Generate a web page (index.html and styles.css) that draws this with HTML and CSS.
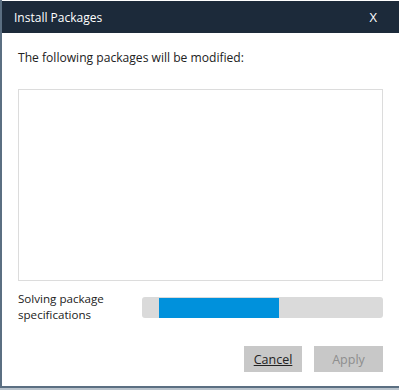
FILE: index.html
```html
<!DOCTYPE html>
<html lang="en">

<head>
  <meta charset="UTF-8">
  <title>Install Packages</title>
  <link rel="stylesheet" href="styles.css">
</head>

<body>
  <div class="dialog">
    <div class="dialog-header">
      <span class="dialog-title">Install Packages</span>
      <span class="dialog-close">X</span>
    </div>
    <div class="dialog-body">
      <p class="intro-text">The following packages will be modified:</p>
      <div class="package-list"></div>
      <div class="status-row">
        <div class="status-label">Solving package<br>specifications</div>
        <div class="progress-track">
          <div class="progress-bar" style="width: 120px;"></div>
        </div>
      </div>
      <div class="button-row">
        <button class="dialog-button cancel-button">Cancel</button>
        <button class="dialog-button apply-button" disabled>Apply</button>
      </div>
    </div>
  </div>
</body>

</html>
```

FILE: styles.css
```css
body {
  margin: 0;
  padding: 0;
  background-color: #b9c3cc;
  font-family: 'Open Sans', 'DejaVu Sans', sans-serif;
  color: #222;
}

.dialog {
  width: 397px;
  height: 386px;
  border-left: 2px solid #5b6f82;
  border-bottom: 2px solid #5b6f82;
  background: #fff;
  display: flex;
  flex-direction: column;
}

.dialog-header {
  background-color: #1c2a3a;
  color: #fff;
  height: 32px;
  margin-top: 1px;
  padding: 0 22px 0 12px;
  display: flex;
  align-items: center;
  justify-content: space-between;
  font-size: 12px;
}

.dialog-close {
  font-size: 13px;
}

.dialog-body {
  padding: 0 16px 0 16px;
  flex: 1;
  display: flex;
  flex-direction: column;
}

.intro-text {
  margin: 16px 0 0 0;
  font-size: 12.1px;
  line-height: 18px;
}

.package-list {
  margin-top: 22px;
  height: 190px;
  border: 1px solid #dcdcdc;
}

.status-row {
  margin-top: 10px;
  display: flex;
  align-items: center;
}

.status-label {
  width: 124px;
  font-size: 11.6px;
  line-height: 16px;
}

.progress-track {
  flex: 1;
  height: 21px;
  background: #dadada;
  border-radius: 3px;
  padding: 1px 0 0 17px;
  box-sizing: border-box;
}

.progress-bar {
  height: 20px;
  background: #0091dc;
}

.button-row {
  margin-top: 23px;
  display: flex;
  justify-content: flex-end;
  gap: 12px;
}

.dialog-button {
  font-family: 'Open Sans', 'DejaVu Sans', sans-serif;
  font-size: 12.5px;
  height: 26px;
  border: none;
  background: #c8c8c8;
  padding: 0;
}

.cancel-button {
  width: 58px;
  color: #222;
  text-decoration: underline;
}

.apply-button {
  width: 69px;
  color: #8e8e8e;
}
```
